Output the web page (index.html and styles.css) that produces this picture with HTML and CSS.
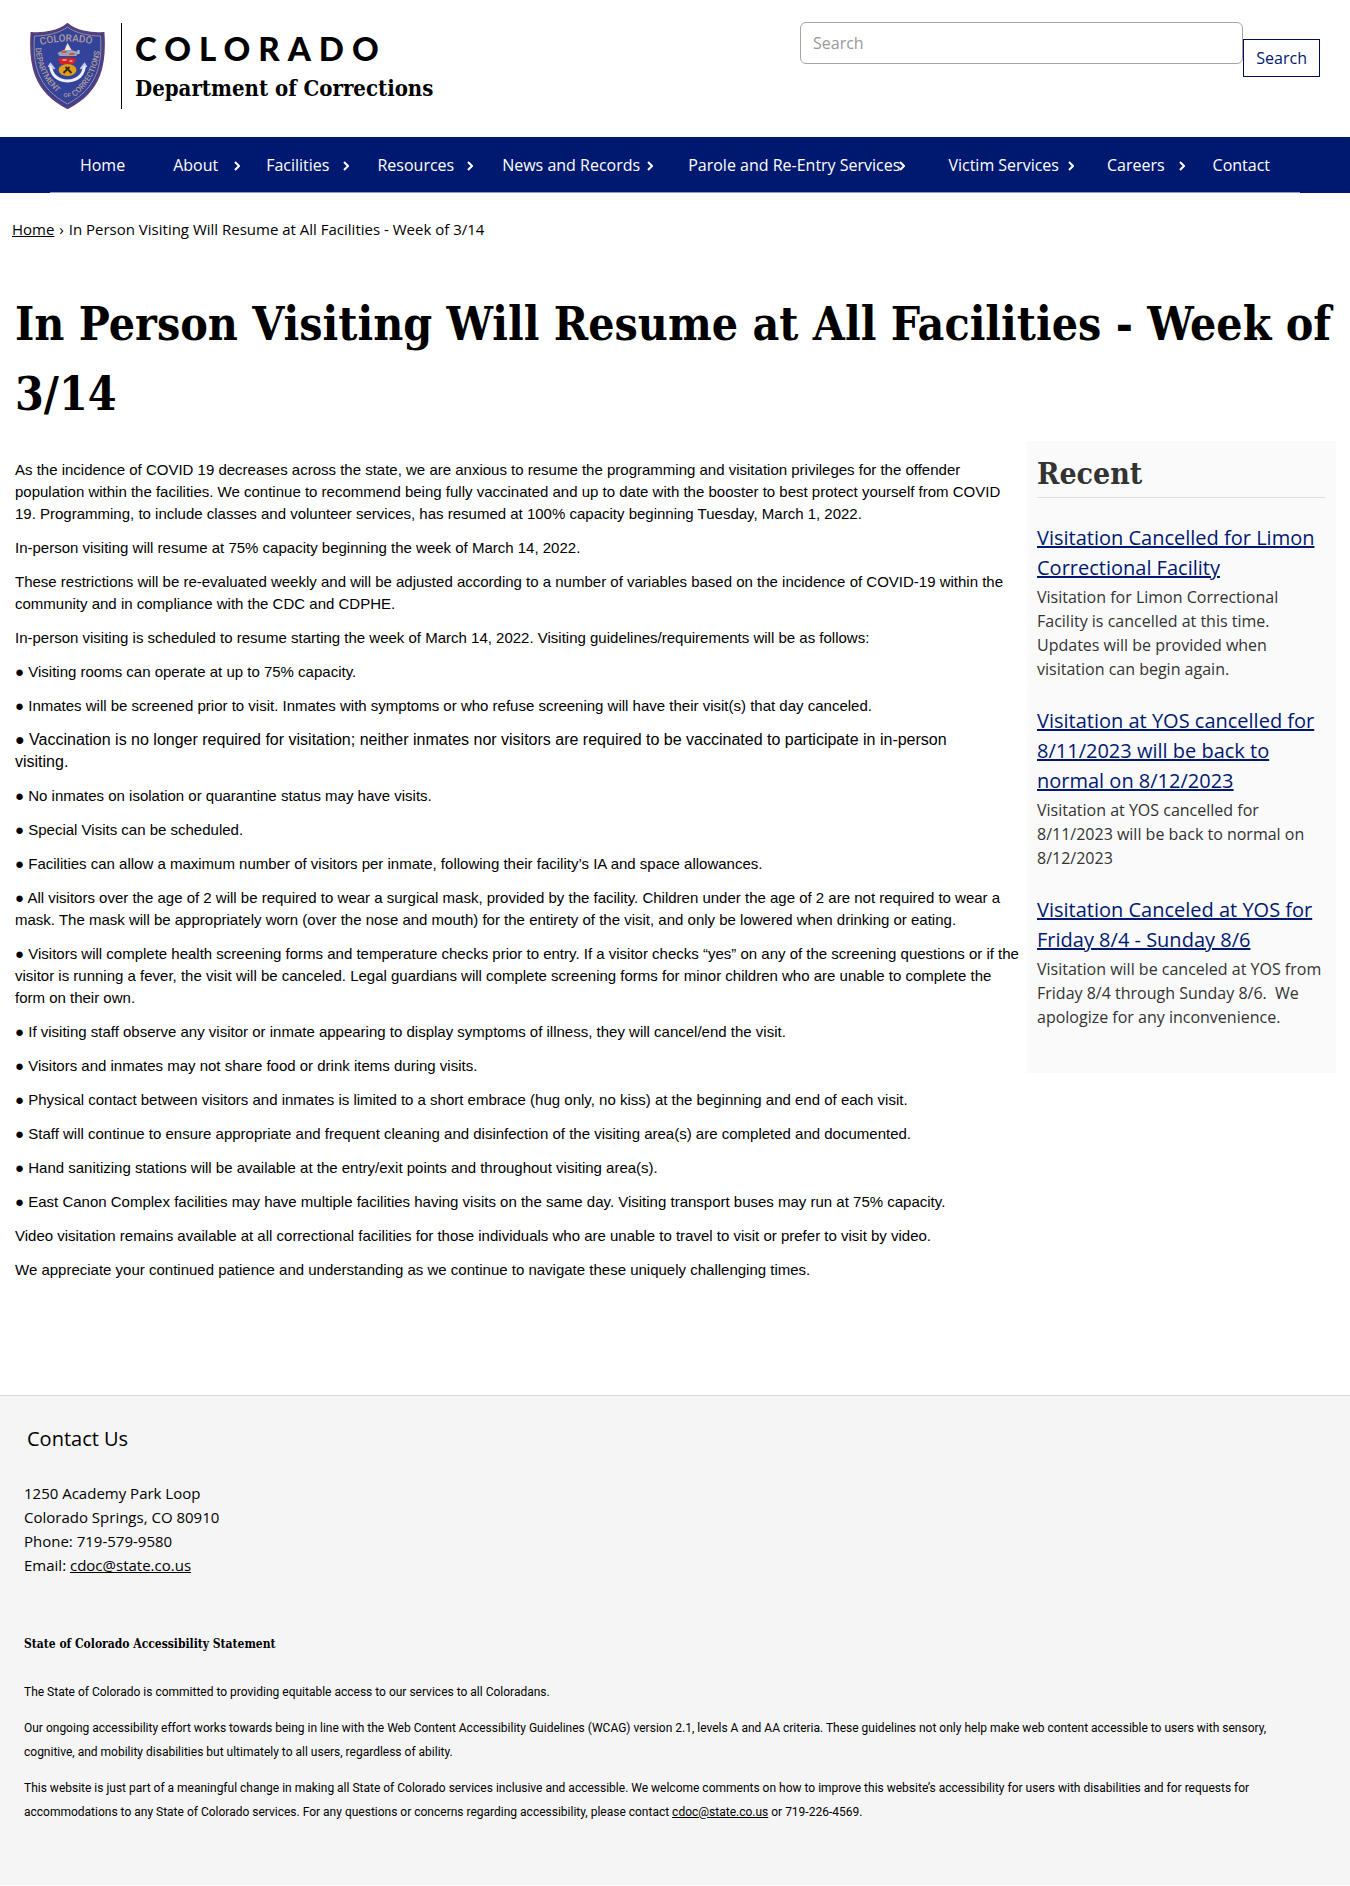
FILE: index.html
```html
<!DOCTYPE html>
<html lang="en">
<head>
<meta charset="utf-8">
<meta name="viewport" content="width=device-width, initial-scale=1">
<title>In Person Visiting Will Resume at All Facilities - Week of 3/14 | Department of Corrections</title>
<link rel="stylesheet" href="styles.css">
</head>
<body>
<header class="site-header">
  <a class="brand" href="#">
    <svg class="brand-shield" viewBox="0 0 76 86" aria-hidden="true">
      <defs>
        <path id="arc-top" d="M11 22 Q38 15 66 22"/>
        <path id="arc-left" d="M6 25 Q8 56 33 74"/>
        <path id="arc-right" d="M45 74 Q68 56 71 23"/>
      </defs>
      <path d="M38 1 C30 8 16 11 2 10 C0 40 4 68 38 85 C72 68 76 40 74 10 C60 11 46 8 38 1Z" fill="#34439a" stroke="#5b3f78" stroke-width="2"/>
      <path d="M38 4 C30 10 17 13 5 13 C3 41 8 65 38 81 C68 65 73 41 71 13 C59 13 46 10 38 4Z" fill="none" stroke="#a58a90" stroke-width="1"/>
      <g class="shield-text">
        <text font-size="10"><textPath href="#arc-top">COLORADO</textPath></text>
        <text font-size="8"><textPath href="#arc-left">DEPARTMENT</textPath></text>
        <text font-size="8"><textPath href="#arc-right">CORRECTIONS</textPath></text>
        <text x="34" y="74" font-size="6">OF</text>
      </g>
      <path d="M38 20 L35 27 H42Z" fill="#f2ead8"/>
      <path d="M28 30 L34 27 H42 L49 29 L47 33 H30Z" fill="#9aa0bd"/>
      <path d="M32 29 H37 M40 31 H45" stroke="#d9552c" stroke-width="2"/>
      <path d="M49 27 V31" stroke="#a8d0e0" stroke-width="2"/>
      <path d="M28 36 Q38 33 47 36 L44 41 H31Z" fill="#d42222"/>
      <path d="M33 37 H37 M40 38 H43" stroke="#fff" stroke-width="1"/>
      <ellipse cx="38" cy="47" rx="9" ry="6" fill="#e0a01c"/>
      <path d="M34 50 L40 44 M42 50 L36 44" stroke="#3b2a14" stroke-width="2"/>
      <path d="M21 42 Q22 57 38 58 Q54 57 55 42" fill="none" stroke="#eef0fa" stroke-width="3"/>
      <path d="M19 44 L21 41 L25 46 M57 44 L55 41 L51 46" fill="none" stroke="#c3cdea" stroke-width="2"/>
    </svg>
    <span class="brand-text">
      <span class="brand-state">COLORADO</span>
      <span class="brand-dept">Department of Corrections</span>
    </span>
  </a>
  <form class="search" role="search">
    <input class="search-input" type="search" placeholder="Search" aria-label="Search">
    <button class="search-button" type="submit">Search</button>
  </form>
</header>

<nav class="main-nav" aria-label="Main">
  <ul class="nav-list">
    <li class="nav-item"><a href="#">Home</a></li>
    <li class="nav-item"><a href="#">About</a><svg class="chevron" viewBox="0 0 6 10" aria-hidden="true"><path d="M1 1 L5 5 L1 9"/></svg></li>
    <li class="nav-item"><a href="#">Facilities</a><svg class="chevron" viewBox="0 0 6 10" aria-hidden="true"><path d="M1 1 L5 5 L1 9"/></svg></li>
    <li class="nav-item"><a href="#">Resources</a><svg class="chevron" viewBox="0 0 6 10" aria-hidden="true"><path d="M1 1 L5 5 L1 9"/></svg></li>
    <li class="nav-item"><a href="#">News and Records</a><svg class="chevron" viewBox="0 0 6 10" aria-hidden="true"><path d="M1 1 L5 5 L1 9"/></svg></li>
    <li class="nav-item"><a href="#">Parole and Re-Entry Services</a><svg class="chevron" viewBox="0 0 6 10" aria-hidden="true"><path d="M1 1 L5 5 L1 9"/></svg></li>
    <li class="nav-item"><a href="#">Victim Services</a><svg class="chevron" viewBox="0 0 6 10" aria-hidden="true"><path d="M1 1 L5 5 L1 9"/></svg></li>
    <li class="nav-item"><a href="#">Careers</a><svg class="chevron" viewBox="0 0 6 10" aria-hidden="true"><path d="M1 1 L5 5 L1 9"/></svg></li>
    <li class="nav-item"><a href="#">Contact</a></li>
  </ul>
</nav>

<nav class="breadcrumb" aria-label="Breadcrumb">
  <a href="#">Home</a> <span>›</span> <span>In Person Visiting Will Resume at All Facilities - Week of 3/14</span>
</nav>

<main class="page">
  <h1 class="page-title">In Person Visiting Will Resume at All Facilities - Week of 3/14</h1>
  <div class="columns">
    <article class="article">
      <p>As the incidence of COVID 19 decreases across the state, we are anxious to resume the programming and visitation privileges for the offender population within the facilities. We continue to recommend being fully vaccinated and up to date with the booster to best protect yourself from COVID 19. Programming, to include classes and volunteer services, has resumed at 100% capacity beginning Tuesday, March 1, 2022.</p>
      <p>In-person visiting will resume at 75% capacity beginning the week of March 14, 2022.</p>
      <p>These restrictions will be re-evaluated weekly and will be adjusted according to a number of variables based on the incidence of COVID-19 within the community and in compliance with the CDC and CDPHE.</p>
      <p>In-person visiting is scheduled to resume starting the week of March 14, 2022. Visiting guidelines/requirements will be as follows:</p>
      <p>● Visiting rooms can operate at up to 75% capacity.</p>
      <p>● Inmates will be screened prior to visit. Inmates with symptoms or who refuse screening will have their visit(s) that day canceled.</p>
      <p class="large">● Vaccination is no longer required for visitation; neither inmates nor visitors are required to be vaccinated to participate in in-person visiting.</p>
      <p>● No inmates on isolation or quarantine status may have visits.</p>
      <p>● Special Visits can be scheduled.</p>
      <p>● Facilities can allow a maximum number of visitors per inmate, following their facility’s IA and space allowances.</p>
      <p>● All visitors over the age of 2 will be required to wear a surgical mask, provided by the facility. Children under the age of 2 are not required to wear a mask. The mask will be appropriately worn (over the nose and mouth) for the entirety of the visit, and only be lowered when drinking or eating.</p>
      <p>● Visitors will complete health screening forms and temperature checks prior to entry. If a visitor checks “yes” on any of the screening questions or if the visitor is running a fever, the visit will be canceled. Legal guardians will complete screening forms for minor children who are unable to complete the form on their own.</p>
      <p>● If visiting staff observe any visitor or inmate appearing to display symptoms of illness, they will cancel/end the visit.</p>
      <p>● Visitors and inmates may not share food or drink items during visits.</p>
      <p>● Physical contact between visitors and inmates is limited to a short embrace (hug only, no kiss) at the beginning and end of each visit.</p>
      <p>● Staff will continue to ensure appropriate and frequent cleaning and disinfection of the visiting area(s) are completed and documented.</p>
      <p>● Hand sanitizing stations will be available at the entry/exit points and throughout visiting area(s).</p>
      <p>● East Canon Complex facilities may have multiple facilities having visits on the same day. Visiting transport buses may run at 75% capacity.</p>
      <p>Video visitation remains available at all correctional facilities for those individuals who are unable to travel to visit or prefer to visit by video.</p>
      <p>We appreciate your continued patience and understanding as we continue to navigate these uniquely challenging times.</p>
    </article>
    <aside class="recent">
      <h2 class="recent-title">Recent</h2>
      <section class="recent-item">
        <a href="#">Visitation Cancelled for Limon Correctional Facility</a>
        <p>Visitation for Limon Correctional Facility is cancelled at this time. Updates will be provided when visitation can begin again.</p>
      </section>
      <section class="recent-item">
        <a href="#">Visitation at YOS cancelled for 8/11/2023 will be back to normal on 8/12/2023</a>
        <p>Visitation at YOS cancelled for 8/11/2023 will be back to normal on 8/12/2023</p>
      </section>
      <section class="recent-item">
        <a href="#">Visitation Canceled at YOS for Friday 8/4 - Sunday 8/6</a>
        <p>Visitation will be canceled at YOS from Friday 8/4 through Sunday 8/6.&nbsp; We apologize for any inconvenience.</p>
      </section>
    </aside>
  </div>
</main>

<footer class="site-footer">
  <h2 class="contact-title">Contact Us</h2>
  <address class="contact">
    1250 Academy Park Loop<br>
    Colorado Springs, CO 80910<br>
    Phone: 719-579-9580<br>
    Email: <a href="#">cdoc@state.co.us</a>
  </address>
  <section class="statement">
    <h3>State of Colorado Accessibility Statement</h3>
    <p>The State of Colorado is committed to providing equitable access to our services to all Coloradans.</p>
    <p>Our ongoing accessibility effort works towards being in line with the Web Content Accessibility Guidelines (WCAG) version 2.1, levels A and AA criteria. These guidelines not only help make web content accessible to users with sensory, cognitive, and mobility disabilities but ultimately to all users, regardless of ability.</p>
    <p>This website is just part of a meaningful change in making all State of Colorado services inclusive and accessible. We welcome comments on how to improve this website’s accessibility for users with disabilities and for requests for accommodations to any State of Colorado services. For any questions or concerns regarding accessibility, please contact <a href="#">cdoc@state.co.us</a> or 719-226-4569.</p>
  </section>
</footer>
</body>
</html>
```
FILE: styles.css
```css
:root {
  --navy: #001970;
  --sans: "Open Sans", "Noto Sans", sans-serif;
  --slab: "DejaVu Serif Condensed", "DejaVu Serif", serif;
}

* { box-sizing: border-box; }

body {
  margin: 0;
  background: #fff;
  color: #000;
  font-family: var(--sans);
  font-size: 15px;
  line-height: 24px;
}

h1, h2, h3, p, ul { margin: 0; }
a { color: inherit; }

/* Header */
.site-header {
  display: flex;
  justify-content: space-between;
  align-items: flex-start;
  min-height: 137px;
  padding: 22px 30px 0 29px;
}

.brand {
  display: flex;
  align-items: center;
  gap: 15px;
  padding-top: 1px;
  text-decoration: none;
}

.brand-shield { width: 77px; height: 86px; }

.shield-text {
  fill: #b09a9c;
  font-family: Roboto, sans-serif;
  font-weight: 500;
}

.brand-text {
  display: flex;
  flex-direction: column;
  justify-content: center;
  height: 86px;
  padding-left: 13px;
  border-left: 1px solid #000;
}

.brand-state {
  font-family: Lato, sans-serif;
  font-size: 33px;
  font-weight: 900;
  line-height: 44px;
  letter-spacing: 8px;
}

.brand-dept {
  font-family: var(--slab);
  font-size: 22px;
  font-weight: 700;
  line-height: 36px;
}

.search {
  display: flex;
  flex: 0 1 520px;
  align-items: flex-start;
}

.search-input {
  flex: 1;
  min-width: 0;
  height: 42px;
  padding: 0 12px;
  border: 1px solid #a5a5a5;
  border-radius: 6px;
  background: #fff;
  font-family: var(--sans);
  font-size: 16px;
}

.search-input::placeholder { color: #999; }

.search-button {
  margin-top: 17px;
  height: 38px;
  padding: 0 12px;
  border: 1px solid #000e50;
  background: #fff;
  color: var(--navy);
  font-family: var(--sans);
  font-size: 16px;
}

/* Main navigation */
.main-nav {
  padding: 0 50px;
  background: var(--navy);
  color: #fff;
}

.nav-list {
  display: flex;
  flex-wrap: wrap;
  justify-content: center;
  padding: 2px 0 0;
  border-bottom: 1px solid #8b9bd0;
  list-style: none;
}

.nav-item {
  position: relative;
  padding: 0 24px;
  font-size: 16px;
  line-height: 53px;
}

.nav-item a { text-decoration: none; }

.chevron {
  position: absolute;
  top: 22px;
  right: calc(10% - 7px);
  width: 6px;
  height: 10px;
  fill: none;
  stroke: #fff;
  stroke-width: 2;
}

/* Breadcrumb */
.breadcrumb { padding: 24px 12px 0; }

.breadcrumb span { margin-left: 1px; }

/* Content */
.page { padding: 48px 14px 114px 15px; }

.page-title {
  font-family: var(--slab);
  font-size: 46px;
  font-weight: 700;
  line-height: 70px;
}

.columns {
  display: flex;
  align-items: flex-start;
  gap: 5px;
  padding-top: 12px;
}

.article {
  flex: 1;
  display: flex;
  flex-direction: column;
  gap: 12px;
  padding-top: 18px;
  font-family: "Liberation Sans", Arial, sans-serif;
  line-height: 22px;
}

.article .large {
  padding-right: 24px;
  font-size: 16px;
}

.recent {
  flex: 0 0 309px;
  padding: 12px 11px 44px 10px;
  background: #fafafa;
  color: #333;
  font-size: 16px;
}

.recent-title {
  padding-bottom: 2px;
  border-bottom: 1px solid #ddd;
  font-family: var(--slab);
  font-size: 30px;
  line-height: 42px;
}

.recent-item {
  display: flex;
  flex-direction: column;
  gap: 2px;
  padding-top: 25px;
}

.recent-item a {
  color: var(--navy);
  font-size: 20px;
  line-height: 30px;
}

/* Footer */
.site-footer {
  padding: 29px 24px 61px;
  border-top: 1px solid #d8d8d8;
  background: #f5f5f5;
}

.contact-title {
  padding-left: 3px;
  font-size: 20px;
  font-weight: 400;
  line-height: 28px;
}

.contact {
  padding-top: 28px;
  font-style: normal;
}

.statement {
  display: flex;
  flex-direction: column;
  gap: 12px;
  padding: 55px 24px 0 0;
  font-family: Roboto, sans-serif;
  font-size: 12px;
}

.statement h3 {
  padding-bottom: 12px;
  font-family: var(--slab);
  font-size: 12px;
}
```
